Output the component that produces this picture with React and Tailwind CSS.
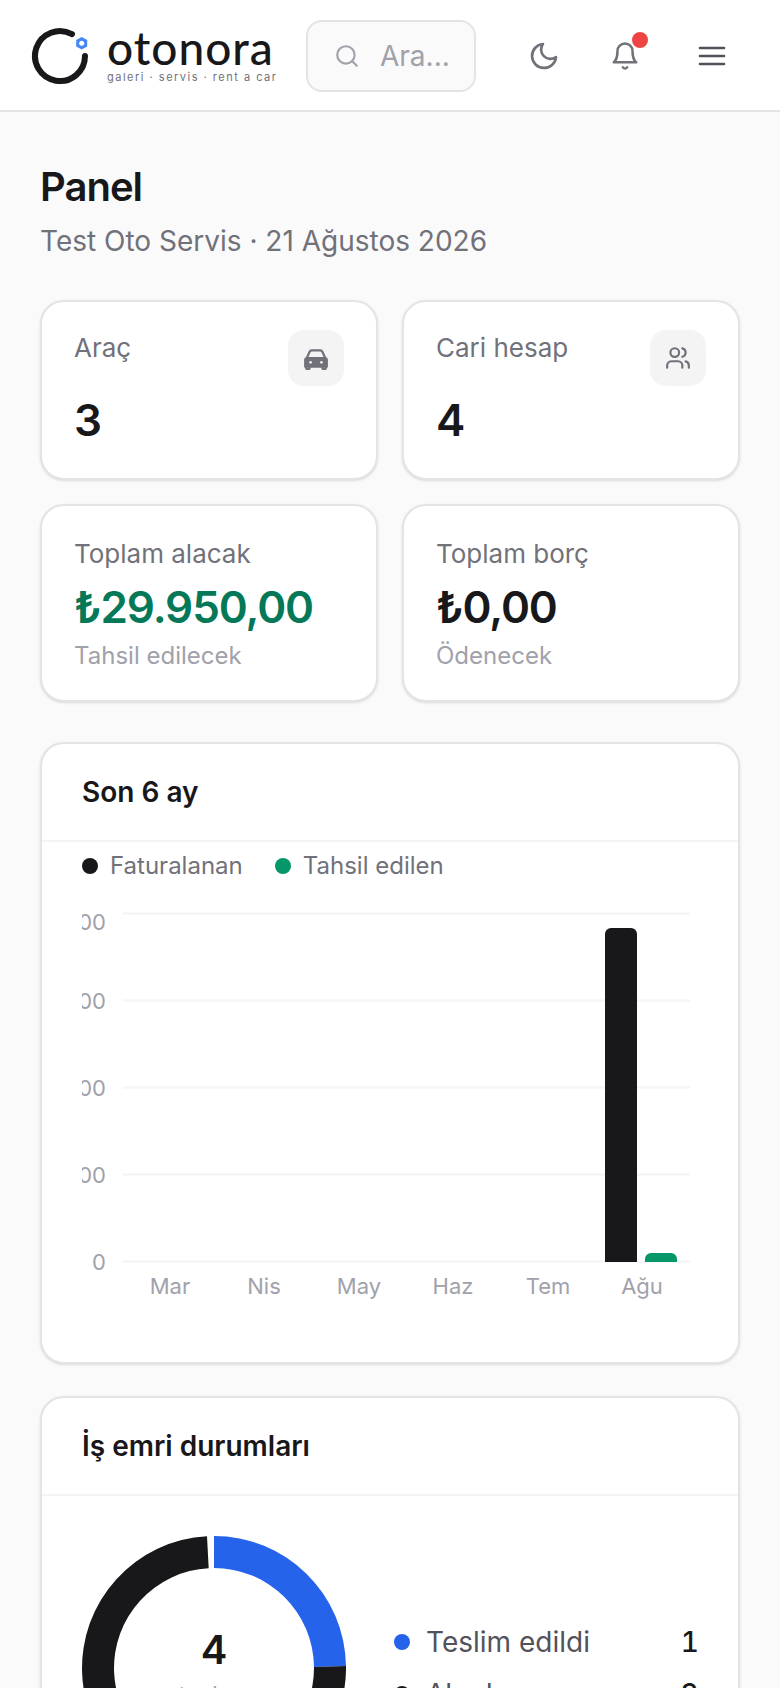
const months = [
  { label: "Mar", x: 170 },
  { label: "Nis", x: 264 },
  { label: "May", x: 359 },
  { label: "Haz", x: 453 },
  { label: "Tem", x: 548 },
  { label: "Ağu", x: 642 },
];

const gridLines = [
  { y: 913.5, label: "30.000", dy: 16 },
  { y: 1000.5, label: "22.500", dy: 8 },
  { y: 1087.5, label: "15.000", dy: 8 },
  { y: 1174.5, label: "7.500", dy: 8 },
  { y: 1261.5, label: "0", dy: 8 },
];

const Logo = () => (
  <div className="flex items-center w-[276px] shrink-0">
    <svg width="60" height="60" viewBox="0 0 60 60">
      <path d="M42 8.100 A25 25 0 1 0 55 30" fill="none" stroke="#18181b" strokeWidth="6" strokeLinecap="round" />
      <path d="M51.700 11 L57.200 14.100 V20.500 L51.700 23.600 L46.200 20.500 V14.100 Z" fill="#4287f5" />
      <circle cx="51.700" cy="17.300" r="2.500" fill="#fff" />
    </svg>
    <div className="flex flex-col ml-[17px]">
      <span className="text-[46px] leading-[40px] font-medium text-[#18181b] font-['Lato',sans-serif] tracking-[1px]">otonora</span>
      <span className="text-[11px] leading-[14px] text-[#71717a] tracking-[1.5px] mt-[2px]">galeri · servis · rent a car</span>
    </div>
  </div>
);

const StatCard = ({ label, value, icon }) => (
  <div className="bg-white border-2 border-[#e4e4e7] rounded-[24px] h-[180px] px-[32px] pt-[28px] shadow-sm flex justify-between">
    <div>
      <p className="text-[26px] leading-[36px] text-[#71717a]">{label}</p>
      <p className="text-[44px] leading-[48px] font-semibold text-[#18181b] mt-[30px]">{value}</p>
    </div>
    <div className="w-[56px] h-[56px] rounded-[16px] bg-[#f4f4f5] flex items-center justify-center">{icon}</div>
  </div>
);

const MoneyCard = ({ label, value, note, color }) => (
  <div className="bg-white border-2 border-[#e4e4e7] rounded-[24px] h-[198px] px-[32px] pt-[30px] shadow-sm">
    <p className="text-[26px] leading-[36px] text-[#71717a]">{label}</p>
    <p className={`text-[44px] leading-[48px] font-semibold tracking-[-1.1px] mt-[11px] ${color}`}>{value}</p>
    <p className="text-[24px] leading-[32px] text-[#a1a1aa] mt-[9px]">{note}</p>
  </div>
);

const CarIcon = () => (
  <svg width="26" height="26" viewBox="0 0 24 24" fill="none" stroke="#71717a" strokeWidth="2" strokeLinecap="round" strokeLinejoin="round">
    <path d="M3.500 12 L6 6.500 C6.400 5.600 7 5 8 5 H16 C17 5 17.600 5.600 18 6.500 L20.500 12" />
    <path d="M2 20 V14 C2 12.800 2.800 12 4 12 H20 C21.200 12 22 12.800 22 14 V20 H2 Z" fill="#71717a" />
    <circle cx="7" cy="16" r="1.200" fill="#f4f4f5" stroke="none" />
    <circle cx="17" cy="16" r="1.200" fill="#f4f4f5" stroke="none" />
    <path d="M3 20 V22 H6 V20 M18 20 V22 H21 V20" />
  </svg>
);

const UsersIcon = () => (
  <svg width="26" height="26" viewBox="0 0 24 24" fill="none" stroke="#71717a" strokeWidth="2" strokeLinecap="round" strokeLinejoin="round">
    <path d="M16 21v-2a4 4 0 0 0-4-4H6a4 4 0 0 0-4 4v2" />
    <circle cx="9" cy="7" r="4" />
    <path d="M22 21v-2a4 4 0 0 0-3-3.870" />
    <path d="M16 3.130a4 4 0 0 1 0 7.750" />
  </svg>
);

const App = () => {
  return (
    <div className="w-[780px] h-[1688px] overflow-hidden bg-[#fafafa] font-['Inter',sans-serif]">
      <header className="h-[112px] bg-white border-b-2 border-[#e4e4e7] flex items-center pl-[30px] pt-[2px]">
        <Logo />
        <div className="w-[170px] h-[72px] rounded-[16px] border-2 border-[#e4e4e7] bg-[#fafafa] flex items-center pl-[26px] gap-[20px] shrink-0">
          <svg className="shrink-0" width="26" height="26" viewBox="0 0 24 24" fill="none" stroke="#a1a1aa" strokeWidth="2" strokeLinecap="round" strokeLinejoin="round">
            <circle cx="11" cy="11" r="8" />
            <path d="m21 21-4.300-4.300" />
          </svg>
          <span className="text-[28px] text-[#a1a1aa]">Ara...</span>
        </div>
        <svg className="ml-[52px] shrink-0" width="32" height="32" viewBox="0 0 24 24" fill="none" stroke="#71717a" strokeWidth="2" strokeLinecap="round" strokeLinejoin="round">
          <path d="M21 12.790A9 9 0 1 1 11.210 3 7 7 0 0 0 21 12.790z" />
        </svg>
        <div className="relative ml-[50px] w-[30px] h-[30px] shrink-0">
          <svg width="30" height="30" viewBox="0 0 24 24" fill="none" stroke="#71717a" strokeWidth="2" strokeLinecap="round" strokeLinejoin="round">
            <path d="M6 8a6 6 0 0 1 12 0c0 7 3 9 3 9H3s3-2 3-9" />
            <path d="M10.300 21a1.940 1.940 0 0 0 3.400 0" />
          </svg>
          <span className="absolute top-[-9px] right-[-8px] w-[16px] h-[16px] rounded-full bg-[#ef4444]" />
        </div>
        <svg className="ml-[56px] shrink-0" width="32" height="32" viewBox="0 0 24 24" fill="none" stroke="#52525b" strokeWidth="2" strokeLinecap="round">
          <path d="M3 6h18" />
          <path d="M3 12h18" />
          <path d="M3 18h18" />
        </svg>
      </header>

      <main className="px-[40px] pt-[53px]">
        <h1 className="text-[40px] leading-[44px] font-semibold tracking-[-1px] text-[#18181b]">Panel</h1>
        <p className="text-[28px] leading-[36px] text-[#71717a] mt-[14px]">Test Oto Servis · 21 Ağustos 2026</p>

        <div className="grid grid-cols-2 gap-[24px] mt-[41px]">
          <StatCard label="Araç" value="3" icon={<CarIcon />} />
          <StatCard label="Cari hesap" value="4" icon={<UsersIcon />} />
          <MoneyCard label="Toplam alacak" value="₺29.950,00" note="Tahsil edilecek" color="text-[#047857]" />
          <MoneyCard label="Toplam borç" value="₺0,00" note="Ödenecek" color="text-[#18181b]" />
        </div>

        <section className="bg-white border-2 border-[#e4e4e7] rounded-[24px] h-[622px] mt-[40px] shadow-sm">
          <h2 className="h-[98px] flex items-center px-[40px] border-b-2 border-[#f4f4f5] text-[28px] font-semibold text-[#18181b]">Son 6 ay</h2>
          <div className="flex items-center gap-[32px] pl-[40px] h-[48px]">
            <div className="flex items-center gap-[12px]">
              <span className="w-[16px] h-[16px] rounded-full bg-[#18181b]" />
              <span className="text-[24px] text-[#71717a]">Faturalanan</span>
            </div>
            <div className="flex items-center gap-[12px]">
              <span className="w-[16px] h-[16px] rounded-full bg-[#059669]" />
              <span className="text-[24px] text-[#71717a]">Tahsil edilen</span>
            </div>
          </div>
          <svg className="ml-[40px]" width="616" height="420" viewBox="82 890 616 420">
            {gridLines.map((g) => (
              <g key={g.y}>
                <line x1="123" x2="690.500" y1={g.y} y2={g.y} stroke="#f4f4f5" strokeWidth="2" />
                <text x="106" y={g.y + g.dy} textAnchor="end" fontSize="22" fill="#a1a1aa">{g.label}</text>
              </g>
            ))}
            <path d="M605 1262 V934 a6 6 0 0 1 6-6 H631 a6 6 0 0 1 6 6 V1262 Z" fill="#18181b" />
            <path d="M645 1262 V1259 a6 6 0 0 1 6-6 H671 a6 6 0 0 1 6 6 V1262 Z" fill="#059669" />
            {months.map((m) => (
              <text key={m.label} x={m.x} y="1294" textAnchor="middle" fontSize="22" fill="#a1a1aa">{m.label}</text>
            ))}
          </svg>
        </section>

        <section className="bg-white border-2 border-[#e4e4e7] rounded-[24px] h-[400px] mt-[32px] shadow-sm">
          <h2 className="h-[98px] flex items-center px-[40px] border-b-2 border-[#f4f4f5] text-[28px] font-semibold text-[#18181b]">İş emri durumları</h2>
          <div className="flex pl-[40px] pt-[40px]">
            <div className="relative w-[264px] h-[264px] shrink-0">
              <svg width="264" height="264" viewBox="0 0 264 264">
                <path d="M132 0 A132 132 0 0 1 264 130 L232 131 A100 100 0 0 0 132 32 Z" fill="#2563eb" />
                <path d="M264 130 A132 132 0 1 1 125 0.200 L126.700 32.200 A100 100 0 1 0 232 131 Z" fill="#18181b" />
              </svg>
              <div className="absolute inset-0 flex flex-col items-center justify-center">
                <span className="text-[40px] leading-[44px] font-semibold text-[#18181b]">4</span>
                <span className="text-[22px] leading-[28px] text-[#a1a1aa] mt-[8px]">toplam</span>
              </div>
            </div>
            <div className="flex-1 pl-[48px] pr-[39px] pt-[84px] flex flex-col gap-[8px]">
              <div className="flex items-center text-[28px] leading-[44px]">
                <span className="w-[16px] h-[16px] rounded-full bg-[#2563eb] mr-[16px]" />
                <span className="text-[#52525b] flex-1">Teslim edildi</span>
                <span className="text-[#18181b] font-medium tabular-nums">1</span>
              </div>
              <div className="flex items-center text-[28px] leading-[44px]">
                <span className="w-[16px] h-[16px] rounded-full bg-[#18181b] mr-[16px]" />
                <span className="text-[#52525b] flex-1">Alındı</span>
                <span className="text-[#18181b] font-medium tabular-nums">3</span>
              </div>
            </div>
          </div>
        </section>
      </main>
    </div>
  );
};

export default App;
